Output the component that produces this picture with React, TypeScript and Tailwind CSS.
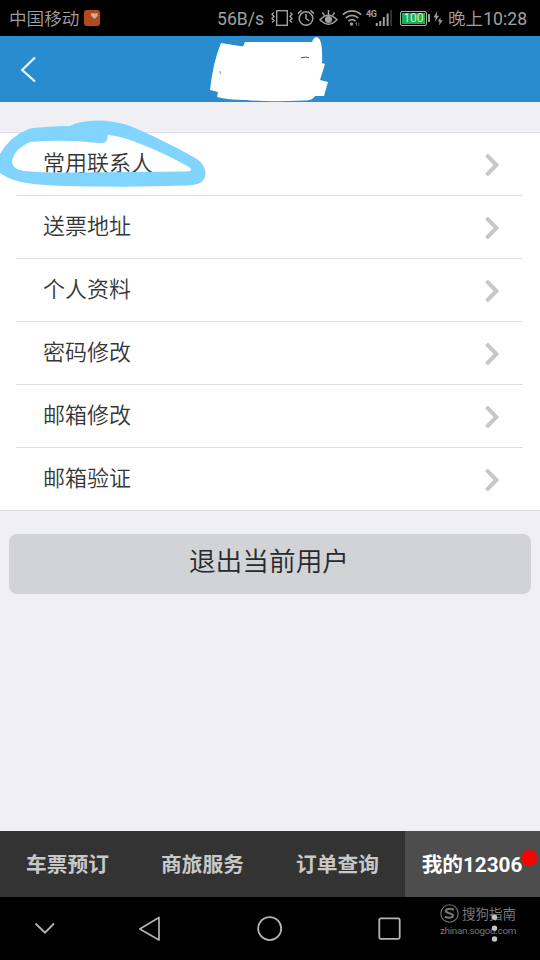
const MENU_ITEMS = ["常用联系人", "送票地址", "个人资料", "密码修改", "邮箱修改", "邮箱验证"];

const TABS = [
  { label: "车票预订", active: false },
  { label: "商旅服务", active: false },
  { label: "订单查询", active: false },
  { label: "我的12306", active: true },
];

function StatusBar() {
  return (
    <header className="flex h-9 items-center bg-black pl-[9px] pr-3 text-[17.6px] leading-9 text-[#a0a0a0]">
      <span className="relative top-px w-[75px] whitespace-nowrap font-[350]">中国移动</span>
      <svg className="h-4 w-4" viewBox="0 0 16 16">
        <rect width="16" height="16" rx="3" fill="#b34a1c" />
        <path d="M10.5 9 L7.2 5.8 Q6.4 3.2 8.5 3 Q10 3 10.4 4 Q11.2 2.8 12.8 3.2 Q14.6 4 13.6 6 Z" fill="#d6a99a" />
      </svg>

      <div className="ml-auto flex items-center">
        <span className="relative top-px w-[54px] whitespace-nowrap">56B/s</span>
        {/* Vibrate */}
        <svg className="h-5 w-[22px]" viewBox="0 0 22 20" fill="none" stroke="#a0a0a0" strokeWidth="1.4">
          <rect x="5.7" y="2.7" width="10.6" height="14.6" />
          <path d="M2.6 4.5 L1 6.5 L3 8.5 L1 10.5 L3 12.5 L1.2 14.5 M19.4 4.5 L21 6.5 L19 8.5 L21 10.5 L19 12.5 L20.8 14.5" />
        </svg>
        {/* Alarm */}
        <svg className="ml-1 h-5 w-[18px]" viewBox="0 0 18 20" fill="none" stroke="#a0a0a0" strokeWidth="1.5">
          <circle cx="9" cy="10.5" r="6.8" />
          <path d="M9 6 V10.5 L12.2 13 M1 5.6 L4.6 2.4 M17 5.6 L13.4 2.4" />
        </svg>
        {/* Eye comfort */}
        <svg className="ml-1 h-5 w-[19px]" viewBox="0 0 19 20" fill="none" stroke="#a0a0a0" strokeWidth="1.5">
          <path d="M1 11.8 Q9.5 2.8 18 11.8 Q9.5 20.6 1 11.8 Z M9.5 2 V6.5 M3.4 4.5 L5.4 7.4 M15.6 4.5 L13.6 7.4" />
          <circle cx="9.5" cy="11.5" r="3.6" fill="#a0a0a0" stroke="none" />
        </svg>
        {/* Wi-Fi */}
        <svg className="ml-1 h-5 w-5" viewBox="0 0 20 20" fill="none" stroke="#a0a0a0" strokeWidth="1.7">
          <path d="M.8 6.6 Q10 -.8 19.2 6.6 M3.7 10 Q10 4.8 16.3 10 M6.4 13.2 Q10 10.2 13.6 13.2" />
          <circle cx="9.5" cy="16" r="1.7" fill="#a0a0a0" stroke="none" />
          <path d="M13.2 16 L14.5 14.5 V18 M16.8 14.5 V18" strokeWidth=".8" stroke="#777777" />
        </svg>
        <span className="relative -top-[4px] left-px ml-[3px] w-[10px] text-[9px] font-bold leading-none tracking-tighter">4G</span>
        <svg className="h-5 w-[17px]" viewBox="0 0 17 20" fill="#a0a0a0">
          <path d="M.8 15 h2 v3 h-2 z M4.3 13 h2 v5 h-2 z M7.8 9 h2 v9 h-2 z M11.6 5.5 h2 v12.5 h-2 z" />
          <rect x="15.3" y="2" width="1.6" height="16" fill="#3c3c3c" />
        </svg>
        {/* Battery */}
        <div className="ml-[8px] flex h-[15px] w-[27px] items-center justify-center rounded-[2px] border border-[#9db8a2] bg-[#1dad4c] text-[12px] leading-none text-[#c9f5d2] ring-1 ring-inset ring-black">
          100
        </div>
        <div className="ml-px h-2 w-[2px] bg-[#a0a0a0]" />
        <svg className="ml-[3px] h-5 w-[10px]" viewBox="0 0 10 20" fill="#a0a0a0">
          <path d="M4.3 3 L.5 9.5 H2.8 L1.8 14 L6 7.7 H3.7 Z M7.3 9.5 L4.9 13.5 H6.6 L6 17.4 L9.7 12.3 H7.6 Z" />
        </svg>
        <span className="relative top-px ml-[5px] w-[80px] whitespace-nowrap">
          <span className="font-[350]">晚上</span>10:28
        </span>
      </div>
    </header>
  );
}

function TitleBar() {
  return (
    <div className="flex h-[66px] items-center bg-[#298ccf]">
      <svg className="ml-[20px] h-7 w-[18px]" viewBox="0 0 18 28" fill="none" stroke="#dffaff" strokeWidth="2.3">
        <path d="M15 2.5 L2.2 15 L15 26.5" />
      </svg>
      <svg className="ml-[172px] h-[66px] w-[120px]" viewBox="0 0 120 66" fill="#ffffff">
        <path d="M11 7 L33 10.5 L35 6 L102 6 Q104 0 108 1.5 Q113 5 112 27 L115 28 L110 44 L118 46 L114 60 L105 60 Q102 65 94 64.5 Q57 66 36 64 Q18 64 7 61 L8 56 L0 54 Q3 26 11 7 Z" />
        <path d="M91 21.7 Q96 20.5 99 21.7" fill="none" stroke="#31566b" strokeWidth="1" />
        <path d="M10.2 35 V38" stroke="#55748a" strokeWidth=".8" />
      </svg>
    </div>
  );
}

function MenuRow({ label, last }: { label: string; last: boolean }) {
  return (
    <li className={last ? "px-4" : "px-4 pr-[17px]"}>
      <div
        className={
          last
            ? "flex h-[62px] items-center justify-between pl-[27px] pr-[24px]"
            : "flex h-[63px] items-center justify-between border-b border-[#dedfe3] pl-[27px] pr-[23px]"
        }
      >
        <span className="pb-px text-[22px] font-[350] leading-none text-[#363636]">{label}</span>
        <svg className="mt-[2px] h-[26px] w-[16px]" viewBox="0 0 16 26" fill="none" stroke="#c7c7ca" strokeWidth="4">
          <path d="M2.5 2.8 L12.4 13 L2.5 23.2" />
        </svg>
      </div>
    </li>
  );
}

function Highlight() {
  return (
    <svg className="absolute -top-[13px] left-0 h-[70px] w-[212px]" viewBox="0 0 212 70">
      <path
        fill="#80d4fd"
        fillRule="evenodd"
        d="M70 6 Q78 1 98 .5 Q114 .5 130 6 C152 15 176 27 197 39 Q206 46 205.5 54 Q205 65 187 65.5 Q145 67 100 66.5 Q50 66.500 30 63.5 Q12 61.5 0 53 V34 Q10 16 30 8.5 Q48 6 70 6 Z M108 15 L107 20 Q105 24 98 23 Q64 19 30 22 Q13 30 12 42 Q12 49 24 51 Q45 53 75 52.5 L187 51.5 Q194 51 189 47 Q162 32 143 25 Q122 16 108 15 Z"
      />
    </svg>
  );
}

function SystemNav() {
  return (
    <nav className="relative flex h-[63px] items-center bg-black">
      <svg className="ml-[34px] h-[14px] w-[22px]" viewBox="0 0 22 14" fill="none" stroke="#b4b4b4" strokeWidth="1.8">
        <path d="M1.5 1.5 L11 10.7 L20 1.5" />
      </svg>
      <svg className="ml-[82px] h-[26px] w-[24px]" viewBox="0 0 24 26" fill="none" stroke="#b4b4b4" strokeWidth="1.7" strokeLinejoin="round">
        <path d="M21 1.5 V24 L1.8 13 Z" />
      </svg>
      <svg className="ml-[95px] h-[26px] w-[26px]" viewBox="0 0 26 26" fill="none" stroke="#b4b4b4" strokeWidth="1.8">
        <circle cx="12.7" cy="12.6" r="11.5" />
      </svg>
      <svg className="ml-[94px] h-[24px] w-[24px]" viewBox="0 0 24 24" fill="none" stroke="#b4b4b4" strokeWidth="1.8">
        <rect x="2.3" y="1.4" width="20.4" height="20.4" rx="1.5" />
      </svg>
      <div className="absolute left-[440px] top-[7px] text-[#777777]">
        <div className="flex h-[19px] items-center gap-[3px]">
          <svg className="h-[19px] w-[19px]" viewBox="0 0 19 19" fill="none" stroke="#777777">
            <circle cx="9.5" cy="9.5" r="8.7" strokeWidth="1.1" />
            <path d="M14 5.8 C10 4 5.6 4.8 5.8 7.2 C6 9.5 13 9 13 11.6 C13 14.3 7.5 14.2 4.8 12.7" strokeWidth="2.1" />
          </svg>
          <span className="relative top-px whitespace-nowrap text-[13.5px] leading-none">搜狗指南</span>
        </div>
        <div className="mt-[2px] w-[77px] text-[9.9px] leading-[12px] tracking-[-0.31px]">zhinan.sogou.com</div>
      </div>
      <svg className="absolute left-[491px] top-[17px] h-[28px] w-[7px]" viewBox="0 0 7 28" fill="#c4c4c4">
        <circle cx="3.5" cy="3.3" r="2.7" />
        <circle cx="3.5" cy="14.2" r="2.7" />
        <circle cx="3.5" cy="25" r="2.7" />
      </svg>
    </nav>
  );
}

export default function App() {
  return (
    <div className="flex h-[960px] w-[540px] flex-col overflow-hidden bg-[#efeff4] font-[Roboto,'Noto_Sans_CJK_SC',sans-serif]">
      <StatusBar />
      <TitleBar />

      <main className="flex-1 pt-[30px]">
        <ul className="relative border-y border-[#dedfe3] bg-white">
          <Highlight />
          {MENU_ITEMS.map((label, i) => (
            <MenuRow key={label} label={label} last={i === MENU_ITEMS.length - 1} />
          ))}
        </ul>
        <button className="mx-[9px] mt-[23px] flex h-[60px] w-[522px] items-center justify-center rounded-lg bg-[#d2d3d7] pb-[4px] pr-[2px] text-[26.7px] font-[350] leading-none text-[#28292c]">
          退出当前用户
        </button>
      </main>

      <nav className="grid h-[66px] grid-cols-4 bg-[#333333]">
        {TABS.map((tab) => (
          <div
            key={tab.label}
            className={
              tab.active
                ? "relative flex items-center justify-center bg-[#4d4d4d] pr-px pt-[4px] text-[20.7px] font-bold text-white"
                : "flex items-center justify-center pt-[4px] text-[20.7px] font-bold text-[#c8c8c8]"
            }
          >
            <span className="whitespace-nowrap">{tab.label}</span>
            {tab.active && <span className="absolute right-[3px] top-[19px] h-4 w-4 rounded-full bg-[#ff0000]" />}
          </div>
        ))}
      </nav>

      <SystemNav />
    </div>
  );
}
